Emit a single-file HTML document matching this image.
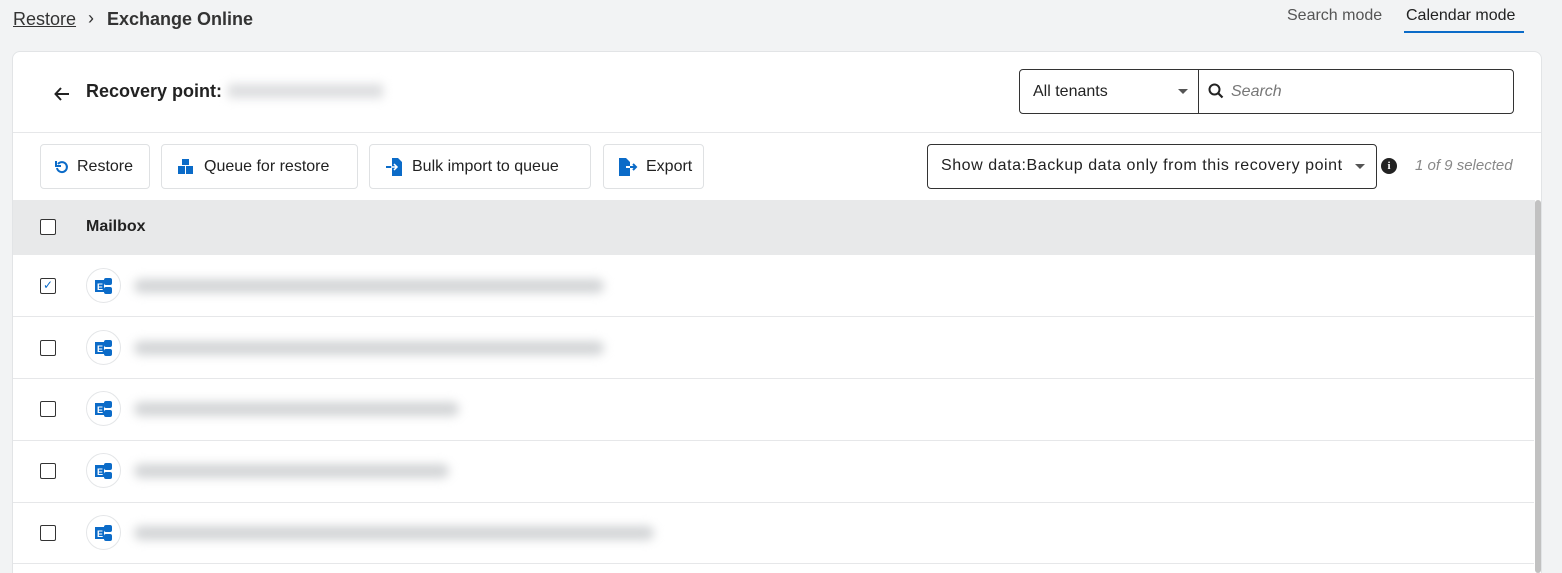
<!DOCTYPE html>
<html style="overflow:hidden;width:1562px;height:573px"><head><meta charset="utf-8"><style>
*{box-sizing:border-box;margin:0;padding:0}
body{width:1562px;height:573px;overflow:hidden;background:#f2f3f4;font-family:"Liberation Sans",sans-serif;color:#222;position:relative}
.abs{position:absolute}
.card{position:absolute;left:12px;top:51px;width:1530px;height:530px;background:#fff;border:1px solid #e2e4e6;border-radius:8px;overflow:hidden}
.btn{position:absolute;top:144px;height:45px;border:1px solid #dfe1e3;border-radius:4px;background:#fff;font-size:16px;display:flex;align-items:center;padding-left:14px;color:#222}
.btn svg{margin-right:8px}
.cb{position:absolute;left:40px;width:16px;height:16px;border:1.5px solid #333;border-radius:2px;background:#fff}
.row{position:absolute;left:13px;width:1521px;height:62px;border-bottom:1px solid #e6e7e9}
.ico{position:absolute;left:86px;width:35px;height:35px;border-radius:50%;border:1px solid #e4e6e8;background:#fff}
.blur{position:absolute;left:134px;height:14px;border-radius:7px;background:#d2d4d6;filter:blur(5px)}
</style></head><body>
<div class="abs" style="left:13px;top:9px;font-size:18px;color:#333;text-decoration:underline">Restore</div>
<div class="abs" style="left:88px;top:8px;font-size:18px;color:#333">›</div>
<div class="abs" style="left:107px;top:9px;font-size:18px;font-weight:bold;color:#333">Exchange Online</div>
<div class="abs" style="left:1287px;top:7px;font-size:16px;color:#555">Search mode</div>
<div class="abs" style="left:1406px;top:7px;font-size:16px;color:#222">Calendar mode</div>
<div class="abs" style="left:1404px;top:31px;width:120px;height:2px;background:#0b6bc8"></div>
<div class="card"></div>
<svg class="abs" style="left:53px;top:85px" width="18" height="18" viewBox="0 0 18 18"><path d="M16 9H3M8 3L2.5 9 8 15" stroke="#222" stroke-width="2" fill="none"/></svg>
<div class="abs" style="left:86px;top:81px;font-size:18px;font-weight:bold;color:#222">Recovery point:</div>
<div class="abs" style="left:228px;top:84px;width:155px;height:14px;background:#dcdddf;filter:blur(5px)"></div>
<div class="abs" style="left:1019px;top:69px;width:495px;height:45px;border:1px solid #333;border-radius:4px"></div>
<div class="abs" style="left:1198px;top:69px;width:1px;height:45px;background:#333"></div>
<div class="abs" style="left:1033px;top:83px;font-size:16px">All tenants</div>
<div class="abs" style="left:1178px;top:89px;border:5px solid transparent;border-top:5px solid #555;border-bottom:0"></div>
<svg class="abs" style="left:1208px;top:83px" width="16" height="16" viewBox="0 0 16 16"><circle cx="6.5" cy="6.5" r="5" stroke="#222" stroke-width="2" fill="none"/><path d="M10 10l4.5 4.5" stroke="#222" stroke-width="2.2"/></svg>
<div class="abs" style="left:1231px;top:83px;font-size:16px;font-style:italic;color:#777">Search</div>
<div class="abs" style="left:13px;top:132px;width:1528px;height:1px;background:#e6e7e9"></div>
<div class="btn" style="left:40px;width:110px"><svg width="14" height="14" viewBox="0 0 14 14"><path d="M3 4a5 5 0 1 1-1 4" stroke="#0b6bc8" stroke-width="2" fill="none"/><path d="M1 1v5h5" stroke="#0b6bc8" stroke-width="2" fill="none"/></svg>Restore</div>
<div class="btn" style="left:161px;width:197px"><svg width="20" height="16" viewBox="0 0 20 16"><rect x="2" y="7" width="7" height="8" fill="#0b6bc8"/><rect x="10" y="7" width="7" height="8" fill="#0b6bc8"/><rect x="6" y="0" width="7" height="6" fill="#0b6bc8"/></svg>Queue for restore</div>
<div class="btn" style="left:369px;width:222px"><svg width="20" height="18" viewBox="0 0 20 18"><path d="M8 0h6l4 4v14H8z" fill="#0b6bc8"/><path d="M2 9h10M9 6l3 3-3 3" stroke="#0b6bc8" stroke-width="2" fill="none"/><path d="M7 9h6M10 6l3 3-3 3" stroke="#fff" stroke-width="1.5" fill="none"/></svg>Bulk import to queue</div>
<div class="btn" style="left:603px;width:101px"><svg width="20" height="18" viewBox="0 0 20 18"><path d="M1 0h7l4 4v14H1z" fill="#0b6bc8"/><path d="M9 9h9M15 6l3 3-3 3" stroke="#0b6bc8" stroke-width="2" fill="none"/><path d="M8 9h4" stroke="#fff" stroke-width="2"/></svg>Export</div>
<div class="abs" style="left:927px;top:144px;width:450px;height:45px;border:1px solid #333;border-radius:4px"></div>
<div class="abs" style="left:941px;top:157px;font-size:16px;letter-spacing:0.55px">Show data:Backup data only from this recovery point</div>
<div class="abs" style="left:1355px;top:164px;border:5px solid transparent;border-top:5px solid #555;border-bottom:0"></div>
<div class="abs" style="left:1381px;top:158px;width:16px;height:16px;border-radius:50%;background:#222;color:#fff;font-size:11px;font-weight:bold;text-align:center;line-height:16px;font-family:'Liberation Serif',serif">i</div>
<div class="abs" style="left:1415px;top:157px;font-size:15px;font-style:italic;color:#888">1 of 9 selected</div>
<div class="abs" style="left:13px;top:200px;width:1522px;height:55px;background:#e8e9ea"></div>
<div class="abs" style="left:1535px;top:200px;width:6px;height:373px;background:#c1c1c1;border-radius:3px"></div>
<div class="cb" style="top:219px"></div>
<div class="abs" style="left:86px;top:218px;font-size:16px;font-weight:bold">Mailbox</div>
<div class="row" style="top:255px"></div><div class="row" style="top:317px"></div><div class="row" style="top:379px"></div><div class="row" style="top:441px"></div><div class="row" style="top:502px"></div>
<div class="cb" style="top:278px;color:#0b6bc8;font-size:12px;line-height:13px;text-align:center">✓</div>
<div class="cb" style="top:340px"></div><div class="cb" style="top:401px"></div><div class="cb" style="top:463px"></div><div class="cb" style="top:525px"></div>
<div class="ico" style="top:268px"></div><div class="ico" style="top:330px"></div><div class="ico" style="top:391px"></div><div class="ico" style="top:453px"></div><div class="ico" style="top:515px"></div>
<svg class="abs" style="left:94px;top:277px" width="20" height="18" viewBox="0 0 20 18"><rect x="10" y="1" width="8" height="7" rx="2" fill="#0b6bc8"/><rect x="10" y="10" width="8" height="7" rx="2" fill="#0b6bc8"/><rect x="1" y="3" width="9" height="12" fill="#0b6bc8"/><text x="3" y="13" font-size="9" fill="#fff" font-family="Liberation Sans" font-weight="bold">E</text></svg>
<svg class="abs" style="left:94px;top:339px" width="20" height="18" viewBox="0 0 20 18"><rect x="10" y="1" width="8" height="7" rx="2" fill="#0b6bc8"/><rect x="10" y="10" width="8" height="7" rx="2" fill="#0b6bc8"/><rect x="1" y="3" width="9" height="12" fill="#0b6bc8"/><text x="3" y="13" font-size="9" fill="#fff" font-family="Liberation Sans" font-weight="bold">E</text></svg>
<svg class="abs" style="left:94px;top:400px" width="20" height="18" viewBox="0 0 20 18"><rect x="10" y="1" width="8" height="7" rx="2" fill="#0b6bc8"/><rect x="10" y="10" width="8" height="7" rx="2" fill="#0b6bc8"/><rect x="1" y="3" width="9" height="12" fill="#0b6bc8"/><text x="3" y="13" font-size="9" fill="#fff" font-family="Liberation Sans" font-weight="bold">E</text></svg>
<svg class="abs" style="left:94px;top:462px" width="20" height="18" viewBox="0 0 20 18"><rect x="10" y="1" width="8" height="7" rx="2" fill="#0b6bc8"/><rect x="10" y="10" width="8" height="7" rx="2" fill="#0b6bc8"/><rect x="1" y="3" width="9" height="12" fill="#0b6bc8"/><text x="3" y="13" font-size="9" fill="#fff" font-family="Liberation Sans" font-weight="bold">E</text></svg>
<svg class="abs" style="left:94px;top:524px" width="20" height="18" viewBox="0 0 20 18"><rect x="10" y="1" width="8" height="7" rx="2" fill="#0b6bc8"/><rect x="10" y="10" width="8" height="7" rx="2" fill="#0b6bc8"/><rect x="1" y="3" width="9" height="12" fill="#0b6bc8"/><text x="3" y="13" font-size="9" fill="#fff" font-family="Liberation Sans" font-weight="bold">E</text></svg>
<div class="blur" style="top:279px;width:470px"></div>
<div class="blur" style="top:341px;width:470px"></div>
<div class="blur" style="top:402px;width:325px"></div>
<div class="blur" style="top:464px;width:315px"></div>
<div class="blur" style="top:526px;width:520px"></div>
</body></html>
